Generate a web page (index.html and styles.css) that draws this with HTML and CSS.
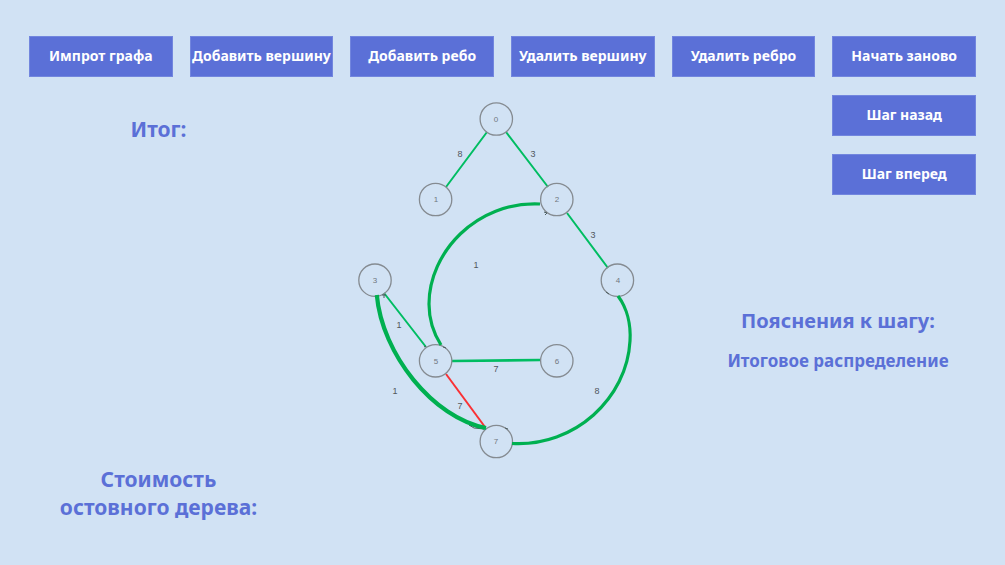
FILE: index.html
```html
<!DOCTYPE html>
<html lang="ru">
<head>
<meta charset="utf-8">
<meta name="viewport" content="width=device-width, initial-scale=1">
<title>Остовное дерево</title>
<link rel="stylesheet" href="styles.css">
</head>
<body>
<nav class="toolbar">
  <button class="btn" type="button">Импрот графа</button>
  <button class="btn" type="button">Добавить вершину</button>
  <button class="btn" type="button">Добавить ребо</button>
  <button class="btn" type="button">Удалить вершину</button>
  <button class="btn" type="button">Удалить ребро</button>
  <button class="btn" type="button">Начать заново</button>
</nav>
<main class="workspace">
  <section class="summary">
    <h2 class="heading">Итог:</h2>
    <h2 class="heading">Стоимость<br>остовного дерева:</h2>
  </section>
  <svg class="graph" viewBox="288 95 412 370" role="img" aria-label="Граф">
    <g class="edge">
      <path d="M487 132L446 187M506 132L548 187M567 213L608 268M384 293L426 347"/>
      <path class="edge-level" d="M452 361L540 360"/>
      <path class="edge-rejected" d="M446 374L485 427"/>
    </g>
    <g class="nodes">
      <circle cx="496.300" cy="119" r="16.200"/>
      <circle cx="435.600" cy="199.500" r="16.200"/>
      <circle cx="556.800" cy="199.500" r="16.200"/>
      <circle cx="375" cy="280.200" r="16.200"/>
      <circle cx="617.400" cy="280.200" r="16.200"/>
      <circle cx="435.600" cy="360.800" r="16.200"/>
      <circle cx="556.800" cy="360.800" r="16.200"/>
      <circle cx="496.300" cy="441.500" r="16.200"/>
    </g>
    <path class="arrow" d="M544 212l3 1-2 2M382 295h4M384 294v4M426 346l-2 1M443 347l3 1M606 292l3 2M505 428l3 1M469 425l15 4-10-1z"/>
    <g class="arc">
      <path d="M540 204C476 201 429 253 429 304C429 321 434 334 441 345"/>
      <path d="M618 296C627 308 631 325 630 341C627 398 575 447 512 443.500"/>
      <path class="arc-heavy" d="M376.800 295C382 354 433 418 486 428"/>
    </g>
    <g class="node-label">
      <text x="496" y="122">0</text>
      <text x="436" y="202">1</text>
      <text x="557" y="202">2</text>
      <text x="375" y="283">3</text>
      <text x="618" y="283">4</text>
      <text x="436" y="364">5</text>
      <text x="557" y="364">6</text>
      <text x="496" y="444">7</text>
    </g>
    <g class="weight">
      <text x="460" y="157">8</text>
      <text x="533" y="157">3</text>
      <text x="593" y="238">3</text>
      <text x="476" y="268">1</text>
      <text x="399" y="328">1</text>
      <text x="496" y="372">7</text>
      <text x="395" y="394">1</text>
      <text x="460" y="409">7</text>
      <text x="597" y="394">8</text>
    </g>
  </svg>
  <section class="steps">
    <div class="step-buttons">
      <button class="btn" type="button">Шаг назад</button>
      <button class="btn" type="button">Шаг вперед</button>
    </div>
    <h2 class="heading heading-step">Пояснения к шагу:</h2>
    <p class="note">Итоговое распределение</p>
  </section>
</main>
</body>
</html>
```
FILE: styles.css
```css
* {
  box-sizing: border-box;
}

body {
  margin: 0;
  padding: 36px 29px;
  background: #d1e2f4;
  color: #5b70d7;
  font-family: "Noto Sans", "Open Sans", sans-serif;
  font-weight: 700;
}

.toolbar {
  display: grid;
  grid-template-columns: repeat(6, 1fr);
  gap: 17px;
}

.btn {
  min-width: 0;
  height: 41px;
  padding: 0 0 2px;
  border: 1px solid #7286de;
  background: #5b70d7;
  color: #fff;
  font: inherit;
  font-size: 14px;
  line-height: 20px;
  white-space: nowrap;
  cursor: pointer;
}

.workspace {
  display: grid;
  grid-template-columns: 259fr 412fr 276fr;
  align-items: start;
  margin-top: 18px;
}

.summary {
  display: flex;
  flex-direction: column;
  gap: 322px;
  padding-top: 20px;
  text-align: center;
}

.heading {
  margin: 0;
  font-size: 21px;
  font-weight: 700;
  line-height: 28px;
}

.heading-step {
  font-size: 20px;
}

.graph {
  display: block;
  width: 100%;
}

.steps {
  display: flex;
  flex-direction: column;
  text-align: center;
}

.step-buttons {
  display: grid;
  gap: 18px;
  width: 52%;
  margin: 0 0 112px auto;
}

.note {
  margin: 14px 0 0;
  font-size: 17px;
  line-height: 24px;
}

.nodes {
  fill: none;
  stroke: #858b91;
  stroke-width: 1.3;
}

.edge {
  fill: none;
  stroke: #00bd62;
  stroke-width: 2;
}

.edge-level {
  stroke-width: 2.6;
}

.edge-rejected {
  stroke: #fa3034;
}

.arc {
  fill: none;
  stroke: #00b050;
  stroke-width: 3.2;
}

.arc-heavy {
  stroke-width: 4.2;
}

.arrow {
  fill: none;
  stroke: #4d5e60;
  stroke-width: 1;
}

.node-label,
.weight {
  font-family: "Liberation Sans", Arial, sans-serif;
  font-weight: 400;
  text-anchor: middle;
}

.node-label {
  fill: #70777e;
  font-size: 8px;
}

.weight {
  fill: #50565c;
  font-size: 9px;
}
```
